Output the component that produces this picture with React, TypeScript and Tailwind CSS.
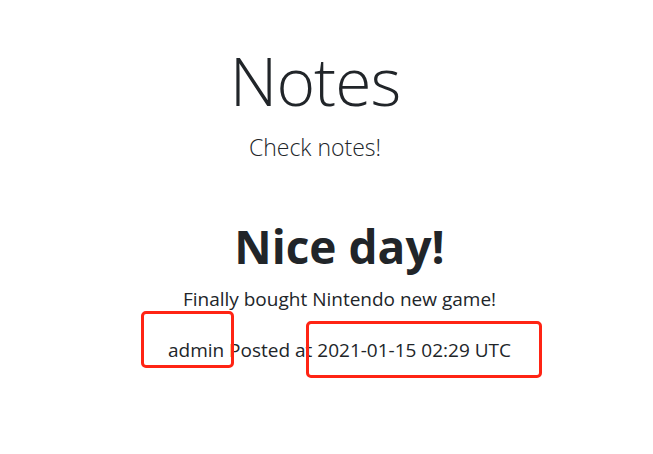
import React from "react";

export default function App() {
  const font = { fontFamily: '"Open Sans", "Noto Sans", "Liberation Sans", sans-serif' };
  return (
    <div className="relative w-[653px] h-[454px] bg-white text-[#212529] overflow-hidden" style={font}>
      <div className="flex flex-col items-center pr-[23px] pt-[38px]">
        <h1 className="text-[66px] font-light leading-[84px] tracking-[-1px]">Notes</h1>
        <p className="text-[23px] font-light leading-[30px] mt-[10px]">Check notes!</p>
      </div>
      <div className="flex flex-col items-center pl-[26px] mt-[54px]">
        <h2 className="text-[46px] font-bold leading-[60px]">Nice day!</h2>
        <p className="text-[19px] leading-[28px] mt-[9px]">Finally bought Nintendo new game!</p>
        <p className="text-[19px] leading-[28px] mt-[23px]">admin Posted at 2021-01-15 02:29 UTC</p>
      </div>
      <div className="absolute left-[141px] top-[311px] w-[93px] h-[57px] border-[3px] border-[#ff2414] rounded-[5px]" />
      <div className="absolute left-[306px] top-[321px] w-[236px] h-[57px] border-[3px] border-[#ff2414] rounded-[5px]" />
    </div>
  );
}
